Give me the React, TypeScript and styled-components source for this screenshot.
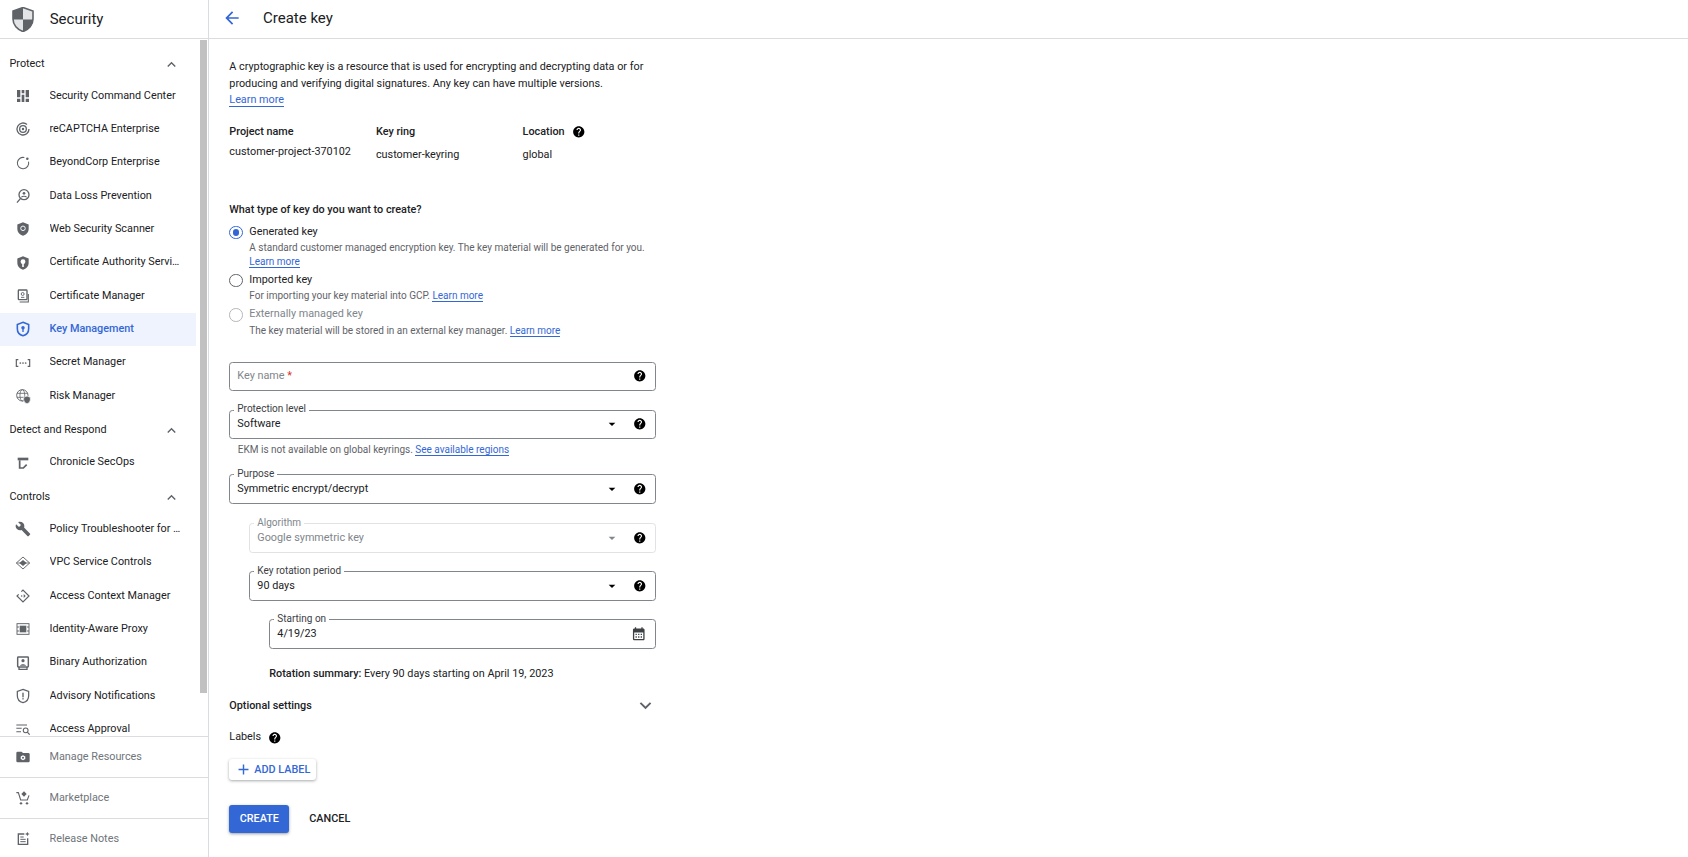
import type { ReactNode } from 'react';
import styled, { createGlobalStyle } from 'styled-components';
import {
	MdAdd,
	MdArrowBack,
	MdArrowDropDown,
	MdBuild,
	MdCalendarMonth,
	MdExpandLess,
	MdExpandMore,
	MdHelp,
} from 'react-icons/md';

const GlobalStyle = createGlobalStyle`
	html, body {
		margin: 0;
		height: 100%;
		background: #fff;
		overflow: hidden;
	}
	body {
		font-family: Roboto, "Liberation Sans", sans-serif;
		font-size: 10.83px;
		line-height: 16.67px;
		color: #202124;
	}
`;

const Page = styled.div`
	display: flex;
	width: 1688px;
	height: 857px;
	overflow: hidden;
`;

const Sidebar = styled.aside`
	display: flex;
	flex-direction: column;
	flex: none;
	width: 208px;
	height: 857px;
	border-right: 1px solid #dadce0;
`;

const BrandBar = styled.div`
	display: flex;
	align-items: center;
	flex: none;
	height: 38px;
	padding-left: 12px;
	border-bottom: 1px solid #dadce0;
	font-size: 15px;
	gap: 15.7px;
`;

const NavArea = styled.div`
	display: flex;
	flex: 1;
	min-height: 0;
`;

const NavList = styled.nav`
	flex: none;
	width: 196px;
	padding-top: 7px;
	overflow: hidden;
`;

const ScrollTrack = styled.div`
	flex: none;
	width: 7px;
	margin-left: 4px;
	padding-top: 1px;
`;

const ScrollThumb = styled.div`
	height: 653px;
	background: #c1c1c1;
`;

const SectionRow = styled.div`
	display: flex;
	align-items: center;
	justify-content: space-between;
	height: 33.33px;
	padding: 3px 16px 0 9.5px;
	box-sizing: border-box;
	color: #202124;
	svg {
		color: #5f6368;
	}
`;

const NavRow = styled.div<{ $active?: boolean }>`
	display: flex;
	align-items: center;
	height: 33.33px;
	padding-left: 14.5px;
	background: ${props => (props.$active ? '#eef3fd' : 'transparent')};
	color: ${props => (props.$active ? '#3367d6' : '#202124')};
	font-weight: ${props => (props.$active ? 500 : 400)};
	svg {
		flex: none;
		color: ${props => (props.$active ? '#3367d6' : '#5f6368')};
	}
`;

const NavText = styled.span`
	width: 131px;
	margin-left: 19px;
	white-space: nowrap;
	overflow: hidden;
	text-overflow: ellipsis;
`;

const FooterArea = styled.div`
	flex: none;
	height: 121px;
	overflow: hidden;
`;

const FooterLink = styled.div`
	display: flex;
	align-items: center;
	height: 40px;
	padding-left: 14.5px;
	border-top: 1px solid #dadce0;
	color: #70757a;
	svg {
		flex: none;
		color: #5f6368;
	}
`;

const Main = styled.main`
	flex: 1;
	min-width: 0;
`;

const TopBar = styled.header`
	display: flex;
	align-items: center;
	height: 38px;
	box-sizing: content-box;
	padding-left: 13px;
	border-bottom: 1px solid #dadce0;
	font-size: 15px;
	svg {
		color: #3367d6;
		margin-bottom: 1.5px;
	}
`;

const TopTitle = styled.h1`
	margin: 0 0 1.5px 21px;
	font-size: 15px;
	font-weight: 400;
`;

const Content = styled.div`
	width: 426.5px;
	padding: 20px 0 0 20.3px;
`;

const Intro = styled.p`
	margin: 0;
`;

const LearnMore = styled.a`
	color: #3367d6;
	border-bottom: 1px solid #3367d6;
	text-decoration: none;
`;

const InfoGrid = styled.div`
	display: grid;
	grid-template-columns: repeat(3, 146.67px);
	margin-top: 14.7px;
`;

const InfoLabel = styled.div`
	display: flex;
	align-items: center;
	gap: 7px;
	font-weight: 500;
`;

const InfoValue = styled.div<{ $drop: number }>`
	margin-top: ${props => props.$drop}px;
`;

const HelpIcon = styled(MdHelp)`
	flex: none;
	font-size: 13.5px;
	color: #000;
`;

const StrongHeading = styled.div<{ $top: number }>`
	margin-top: ${props => props.$top}px;
	font-weight: 500;
`;

const RadioGroup = styled.div`
	margin-top: 4.4px;
`;

const RadioOption = styled.div`
	display: grid;
	grid-template-columns: 20px 1fr;
	margin-bottom: 2.5px;
`;

const RadioCircle = styled.span<{ $checked?: boolean; $disabled?: boolean }>`
	display: flex;
	align-items: center;
	justify-content: center;
	width: 13.5px;
	height: 13.5px;
	margin-top: 2.2px;
	box-sizing: border-box;
	border-radius: 50%;
	border: 1.3px solid ${props => (props.$checked ? '#3367d6' : props.$disabled ? '#b4b6b9' : '#5f6368')};
	&::after {
		content: '';
		display: ${props => (props.$checked ? 'block' : 'none')};
		width: 6.6px;
		height: 6.6px;
		border-radius: 50%;
		background: #3367d6;
	}
`;

const RadioLabel = styled.div<{ $disabled?: boolean }>`
	color: ${props => (props.$disabled ? '#80868b' : '#202124')};
`;

const RadioHint = styled.div`
	margin-top: 1px;
	font-size: 10px;
	line-height: 14px;
	color: #5f6368;
`;

const Field = styled.div<{ $indent?: number; $top: number; $disabled?: boolean }>`
	position: relative;
	display: flex;
	align-items: center;
	gap: 13px;
	height: 29.33px;
	box-sizing: border-box;
	margin-top: ${props => props.$top}px;
	margin-left: ${props => props.$indent ?? 0}px;
	padding: 0 8px 0 7px;
	border: 1px solid ${props => (props.$disabled ? '#e0e2e4' : '#80868b')};
	border-radius: 3.4px;
	color: ${props => (props.$disabled ? '#80868b' : '#202124')};
`;

const FieldValue = styled.div`
	flex: 1;
`;

const Placeholder = styled(FieldValue)`
	color: #80868b;
	em {
		color: #d93025;
		font-style: normal;
	}
`;

const FloatLabel = styled.span<{ $disabled?: boolean }>`
	position: absolute;
	top: -7.5px;
	left: 4px;
	padding: 0 3px;
	background: #fff;
	font-size: 10px;
	line-height: 12px;
	color: ${props => (props.$disabled ? '#80868b' : '#3c4043')};
`;

const Caret = styled(MdArrowDropDown)<{ $disabled?: boolean }>`
	flex: none;
	font-size: 16px;
	color: ${props => (props.$disabled ? '#80868b' : '#000')};
`;

const CalendarIcon = styled(MdCalendarMonth)`
	flex: none;
	font-size: 15.5px;
	color: #3c4043;
`;

const FieldHint = styled.div`
	margin-top: 4px;
	padding-left: 8.5px;
	font-size: 10px;
	line-height: 14px;
	color: #5f6368;
`;

const Summary = styled.div`
	margin-top: 17.7px;
	margin-left: 40px;
	b {
		font-weight: 500;
	}
`;

const OptionalRow = styled.div`
	display: flex;
	align-items: center;
	justify-content: space-between;
	height: 16.67px;
	margin-top: 14.5px;
	margin-right: -1px;
	font-weight: 500;
	svg {
		font-size: 23px;
		color: #5f6368;
	}
`;

const LabelsRow = styled.div`
	display: flex;
	align-items: center;
	gap: 7px;
	margin-top: 15.3px;
`;

const AddButton = styled.button`
	display: flex;
	align-items: center;
	gap: 2px;
	width: 87px;
	height: 21px;
	margin-top: 12.7px;
	padding: 0 0 0 6px;
	border: 0;
	border-radius: 3px;
	background: #fff;
	box-shadow: 0 1px 3px rgba(60, 64, 67, 0.45);
	font: 500 10.83px Roboto, sans-serif;
	color: #3367d6;
	svg {
		font-size: 17px;
	}
`;

const Actions = styled.div`
	display: flex;
	align-items: center;
	gap: 20px;
	margin-top: 25.5px;
`;

const CreateButton = styled.button`
	width: 60px;
	height: 27.3px;
	padding: 0;
	border: 0;
	border-radius: 3px;
	background: #3367d6;
	box-shadow: 0 1px 3px rgba(60, 64, 67, 0.5);
	font: 500 10.83px Roboto, sans-serif;
	color: #fff;
`;

const CancelButton = styled.button`
	padding: 0;
	border: 0;
	background: none;
	font: 500 10.83px Roboto, sans-serif;
	color: #202124;
`;

const SHIELD = 'M12 2l8.5 3.2v6.3c0 5-3.6 9.2-8.5 10.5-4.9-1.3-8.5-5.5-8.5-10.5V5.2z';

function Glyph({ children }: { children: ReactNode }) {
	return (
		<svg width='16' height='16' viewBox='0 0 24 24' fill='currentColor' stroke='none'>
			{children}
		</svg>
	);
}

function Line({ d, w = 2 }: { d: string; w?: number }) {
	return <path d={d} fill='none' stroke='currentColor' strokeWidth={w} />;
}

const navIcons: Record<string, ReactNode> = {
	scc: <path d='M3 3h5v11H3zM10 3h4v5h-4zM16 3h5v11h-5zM10 10h4v11h-4zM3 16h5v5H3zM16 16h5v5h-5z' />,
	recaptcha: (
		<>
			<Line d='M21 12a9 9 0 1 1-3-6.7' />
			<circle cx='12' cy='12' r='5' fill='none' stroke='currentColor' strokeWidth='2' />
			<circle cx='12' cy='12' r='1.8' />
		</>
	),
	beyond: (
		<>
			<Line d='M14 3.8A8.5 8.5 0 1 0 20.3 10' w={1.6} />
			<circle cx='18.5' cy='5.5' r='1.9' />
		</>
	),
	dlp: (
		<>
			<circle cx='13.5' cy='10' r='7.5' fill='none' stroke='currentColor' strokeWidth='2' />
			<Line d='M8 16l-5 6' />
			<circle cx='13.5' cy='8' r='2' />
			<Line d='M9.5 14c1.5-2.3 6.5-2.3 8 0' w={1.6} />
		</>
	),
	wss: (
		<>
			<path d={SHIELD} />
			<circle cx='12' cy='11' r='3.4' fill='none' stroke='#fff' strokeWidth='1.4' />
		</>
	),
	cas: (
		<>
			<path d={SHIELD} />
			<circle cx='12' cy='10' r='3.6' fill='#fff' />
			<rect x='10.8' y='11' width='2.4' height='7' fill='#fff' />
		</>
	),
	cert: (
		<>
			<rect x='5' y='3' width='13' height='14.5' rx='1' fill='none' stroke='currentColor' strokeWidth='2' />
			<circle cx='11.5' cy='9' r='2.2' fill='none' stroke='currentColor' strokeWidth='1.4' />
			<Line d='M9 14h5' w={1.4} />
			<Line d='M7 21h13V9' w={1.6} />
		</>
	),
	key: (
		<>
			<path d={SHIELD} fill='none' stroke='currentColor' strokeWidth='2.4' />
			<circle cx='12' cy='10' r='2.6' />
			<rect x='11' y='11' width='2' height='5.5' />
		</>
	),
	secret: (
		<>
			<Line d='M5 7H2v10h3M19 7h3v10h-3' w={1.8} />
			<circle cx='8' cy='12' r='1.3' />
			<circle cx='12' cy='12' r='1.3' />
			<circle cx='16' cy='12' r='1.3' />
		</>
	),
	risk: (
		<>
			<circle cx='11' cy='11' r='8.5' fill='none' stroke='currentColor' strokeWidth='1.4' />
			<ellipse cx='11' cy='11' rx='3.6' ry='8.5' fill='none' stroke='currentColor' strokeWidth='1.2' />
			<Line d='M3 8h16M3 14h16' w={1.2} />
			<path d='M18 12l5 2v3.5c0 3-2.2 5-5 6-2.8-1-5-3-5-6V14z' stroke='#fff' strokeWidth='1' />
		</>
	),
	chronicle: (
		<>
			<path d='M4 4h16v4H4z' />
			<Line d='M7 8v11.5h5.5l5-5' w={2.6} />
		</>
	),
	vpc: (
		<>
			<path d='M12 3l10 9-10 9-10-9z' fill='none' stroke='currentColor' strokeWidth='1.4' />
			<path d='M12 7.5l5.5 4.5-5.5 4.5L6.5 12z' />
			<Line d='M2 12h20' w={1.2} />
		</>
	),
	context: (
		<>
			<path d='M9.5 5.5L12 3l9 9-9 9-9-9 2.5-2.5' fill='none' stroke='currentColor' strokeWidth='1.8' />
			<circle cx='10' cy='12' r='1.2' />
			<path d='M13 9l3 3-3 3z' />
		</>
	),
	iap: (
		<>
			<rect x='3' y='4' width='18' height='16' fill='none' stroke='currentColor' strokeWidth='1.4' />
			<rect x='7' y='7' width='10' height='10' />
			<Line d='M3 9h3M3 15h3M18 9h3M18 15h3' w={1.4} />
		</>
	),
	binary: (
		<>
			<rect x='4' y='3' width='16' height='15' rx='1' fill='none' stroke='currentColor' strokeWidth='2.2' />
			<circle cx='12' cy='8.5' r='2.4' />
			<path d='M7.5 16c.6-3 8.4-3 9 0z' />
			<Line d='M6 18v3.5h12V18' />
		</>
	),
	advisory: (
		<>
			<path d={SHIELD} fill='none' stroke='currentColor' strokeWidth='1.9' />
			<rect x='11' y='7' width='2' height='7' />
			<rect x='11' y='15.2' width='2' height='2' />
		</>
	),
	approval: (
		<>
			<Line d='M2 6h16M2 11h8M2 16h7' w={1.6} />
			<circle cx='16' cy='14' r='3.6' fill='none' stroke='currentColor' strokeWidth='1.6' />
			<Line d='M18.5 16.8l3.5 3.7' w={1.8} />
		</>
	),
	manage: (
		<>
			<path d='M10 4H4a2 2 0 0 0-2 2v12a2 2 0 0 0 2 2h16a2 2 0 0 0 2-2V8a2 2 0 0 0-2-2h-8z' />
			<path d='M12 9.2l3.4 2v3.9L12 17l-3.4-1.9v-3.9z' fill='#fff' />
			<circle cx='12' cy='13' r='1.5' />
		</>
	),
	market: (
		<>
			<Line d='M2 4h3l3.5 11h10l2.5-7' w={1.7} />
			<circle cx='9' cy='20' r='1.8' />
			<circle cx='18' cy='20' r='1.8' />
			<path d='M13.5 2l4 4-4 4-4-4z' />
		</>
	),
	release: (
		<>
			<Line d='M14 4.5H5V20h14v-9' />
			<Line d='M8 9h5M8 12.5h8M8 16h8' w={1.5} />
			<path d='M18.5 1l1 2.5L22 4.5l-2.5 1-1 2.5-1-2.5-2.5-1 2.5-1z' />
		</>
	),
};

type NavEntry = { label: string; icon: string; active?: boolean };

const navSections: { title: string; items: NavEntry[] }[] = [
	{
		title: 'Protect',
		items: [
			{ label: 'Security Command Center', icon: 'scc' },
			{ label: 'reCAPTCHA Enterprise', icon: 'recaptcha' },
			{ label: 'BeyondCorp Enterprise', icon: 'beyond' },
			{ label: 'Data Loss Prevention', icon: 'dlp' },
			{ label: 'Web Security Scanner', icon: 'wss' },
			{ label: 'Certificate Authority Service', icon: 'cas' },
			{ label: 'Certificate Manager', icon: 'cert' },
			{ label: 'Key Management', icon: 'key', active: true },
			{ label: 'Secret Manager', icon: 'secret' },
			{ label: 'Risk Manager', icon: 'risk' },
		],
	},
	{
		title: 'Detect and Respond',
		items: [{ label: 'Chronicle SecOps', icon: 'chronicle' }],
	},
	{
		title: 'Controls',
		items: [
			{ label: 'Policy Troubleshooter for IAM', icon: 'wrench' },
			{ label: 'VPC Service Controls', icon: 'vpc' },
			{ label: 'Access Context Manager', icon: 'context' },
			{ label: 'Identity-Aware Proxy', icon: 'iap' },
			{ label: 'Binary Authorization', icon: 'binary' },
			{ label: 'Advisory Notifications', icon: 'advisory' },
			{ label: 'Access Approval', icon: 'approval' },
		],
	},
];

const footerLinks = [
	{ label: 'Manage Resources', icon: 'manage' },
	{ label: 'Marketplace', icon: 'market' },
	{ label: 'Release Notes', icon: 'release' },
];

function SecurityLogo() {
	return (
		<svg width='22' height='25' viewBox='0 0 22 25'>
			<path d='M11 .5L21 4v8c0 6-4.2 10.8-10 12.5C5.2 22.8 1 18 1 12V4z' fill='#e3e4e6' />
			<path d='M11 .5V12.5H1V4zM11 12.5h10c0 6-4.2 10.3-10 12z' fill='#5f6368' />
			<path d='M11 .5L21 4v8c0 6-4.2 10.8-10 12.5C5.2 22.8 1 18 1 12V4z' fill='none' stroke='#5f6368' strokeWidth='1.6' />
		</svg>
	);
}

function NavIcon({ name }: { name: string }) {
	if (name === 'wrench') return <MdBuild size={16} />;
	return <Glyph>{navIcons[name]}</Glyph>;
}

function App() {
	return (
		<Page>
			<GlobalStyle />
			<Sidebar>
				<BrandBar>
					<SecurityLogo />
					Security
				</BrandBar>
				<NavArea>
					<NavList>
						{navSections.map(section => (
							<div key={section.title}>
								<SectionRow>
									{section.title}
									<MdExpandLess size={17} />
								</SectionRow>
								{section.items.map(item => (
									<NavRow key={item.label} $active={item.active}>
										<NavIcon name={item.icon} />
										<NavText>{item.label}</NavText>
									</NavRow>
								))}
							</div>
						))}
					</NavList>
					<ScrollTrack>
						<ScrollThumb />
					</ScrollTrack>
				</NavArea>
				<FooterArea>
					{footerLinks.map(link => (
						<FooterLink key={link.label}>
							<NavIcon name={link.icon} />
							<NavText>{link.label}</NavText>
						</FooterLink>
					))}
				</FooterArea>
			</Sidebar>
			<Main>
				<TopBar>
					<MdArrowBack size={20} />
					<TopTitle>Create key</TopTitle>
				</TopBar>
				<Content>
					<Intro>
						A cryptographic key is a resource that is used for encrypting and decrypting data or for
						producing and verifying digital signatures. Any key can have multiple versions.
						<br />
						<LearnMore>Learn more</LearnMore>
					</Intro>
					<InfoGrid>
						<InfoLabel>Project name</InfoLabel>
						<InfoLabel>Key ring</InfoLabel>
						<InfoLabel>
							Location
							<HelpIcon />
						</InfoLabel>
						<InfoValue $drop={3.4}>customer-project-370102</InfoValue>
						<InfoValue $drop={6.4}>customer-keyring</InfoValue>
						<InfoValue $drop={6.4}>global</InfoValue>
					</InfoGrid>
					<StrongHeading $top={39}>What type of key do you want to create?</StrongHeading>
					<RadioGroup>
						<RadioOption>
							<RadioCircle $checked />
							<div>
								<RadioLabel>Generated key</RadioLabel>
								<RadioHint>
									A standard customer managed encryption key. The key material will be generated for you.
									<br />
									<LearnMore>Learn more</LearnMore>
								</RadioHint>
							</div>
						</RadioOption>
						<RadioOption>
							<RadioCircle />
							<div>
								<RadioLabel>Imported key</RadioLabel>
								<RadioHint>
									For importing your key material into GCP. <LearnMore>Learn more</LearnMore>
								</RadioHint>
							</div>
						</RadioOption>
						<RadioOption>
							<RadioCircle $disabled />
							<div>
								<RadioLabel $disabled>Externally managed key</RadioLabel>
								<RadioHint>
									The key material will be stored in an external key manager. <LearnMore>Learn more</LearnMore>
								</RadioHint>
							</div>
						</RadioOption>
					</RadioGroup>
					<Field $top={24}>
						<Placeholder>
							Key name <em>*</em>
						</Placeholder>
						<HelpIcon />
					</Field>
					<Field $top={18.67}>
						<FloatLabel>Protection level</FloatLabel>
						<FieldValue>Software</FieldValue>
						<Caret />
						<HelpIcon />
					</Field>
					<FieldHint>
						EKM is not available on global keyrings. <LearnMore>See available regions</LearnMore>
					</FieldHint>
					<Field $top={17.6}>
						<FloatLabel>Purpose</FloatLabel>
						<FieldValue>Symmetric encrypt/decrypt</FieldValue>
						<Caret />
						<HelpIcon />
					</Field>
					<Field $top={19.6} $indent={20} $disabled>
						<FloatLabel $disabled>Algorithm</FloatLabel>
						<FieldValue>Google symmetric key</FieldValue>
						<Caret $disabled />
						<HelpIcon />
					</Field>
					<Field $top={18.67} $indent={20}>
						<FloatLabel>Key rotation period</FloatLabel>
						<FieldValue>90 days</FieldValue>
						<Caret />
						<HelpIcon />
					</Field>
					<Field $top={18.67} $indent={40}>
						<FloatLabel>Starting on</FloatLabel>
						<FieldValue>4/19/23</FieldValue>
						<CalendarIcon />
					</Field>
					<Summary>
						<b>Rotation summary:</b> Every 90 days starting on April 19, 2023
					</Summary>
					<OptionalRow>
						Optional settings
						<MdExpandMore />
					</OptionalRow>
					<LabelsRow>
						Labels
						<HelpIcon />
					</LabelsRow>
					<AddButton>
						<MdAdd />
						ADD LABEL
					</AddButton>
					<Actions>
						<CreateButton>CREATE</CreateButton>
						<CancelButton>CANCEL</CancelButton>
					</Actions>
				</Content>
			</Main>
		</Page>
	);
}

export default App;
